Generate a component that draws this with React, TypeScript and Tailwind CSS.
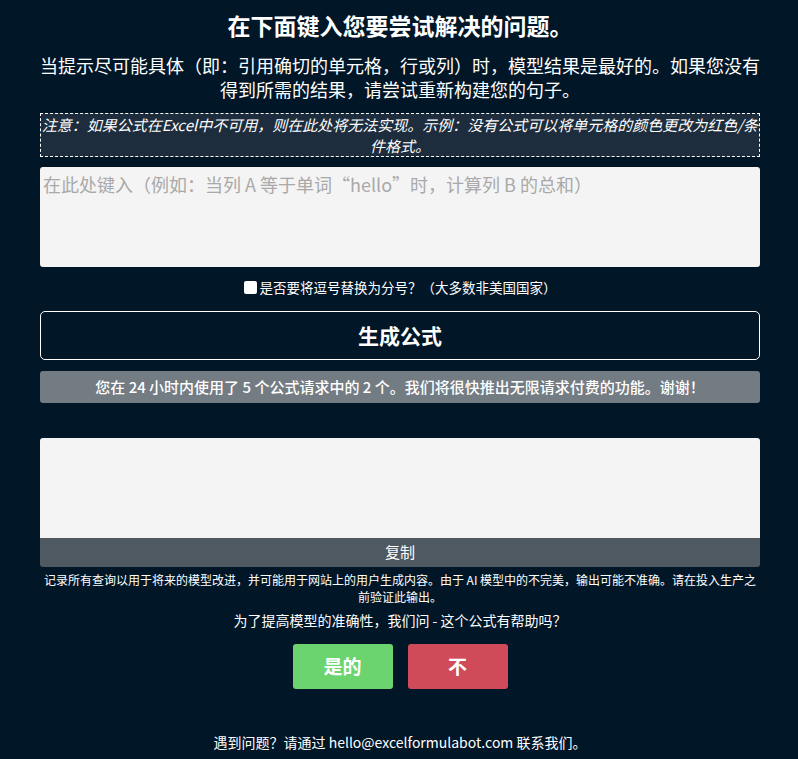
import React from "react";

export default function App() {
  const font = { fontFamily: '"Noto Sans CJK SC", "Noto Sans", sans-serif' };
  return (
    <div className="min-h-[759px] w-full bg-[#011627] text-white" style={font}>
      <div className="ml-[40px] flex w-[720px] flex-col items-stretch pt-[8px] pb-[6px]">
        <h1 className="text-center text-[23px] font-bold leading-[34px]">在下面键入您要尝试解决的问题。</h1>
        <p className="mt-[11px] text-center text-[18px] leading-[24px]">
          当提示尽可能具体（即：引用确切的单元格，行或列）时，模型结果是最好的。如果您没有得到所需的结果，请尝试重新构建您的句子。
        </p>
        <div className="mt-[12px] border border-dashed border-white bg-[#1d2d3d] py-[0px] text-center text-[15px] italic leading-[21px]">
          注意：如果公式在Excel中不可用，则在此处将无法实现。示例：没有公式可以将单元格的颜色更改为红色/条件格式。
        </div>
        <textarea
          className="mt-[10px] h-[100px] w-full resize-none rounded-[3px] bg-[#f4f4f4] px-[3px] py-[4px] text-[18px] leading-[26px] text-black outline-none placeholder:text-[#a9a9a9]"
          placeholder="在此处键入（例如：当列 A 等于单词“hello”时，计算列 B 的总和）"
          style={font}
        />
        <label className="mt-[11px] flex items-center justify-center gap-[3px] text-[13.5px] leading-[18px]">
          <input type="checkbox" className="h-[13px] w-[13px] appearance-none rounded-[2px] bg-white" />
          <span>是否要将逗号替换为分号？（大多数非美国国家）</span>
        </label>
        <button className="mt-[15px] h-[49px] w-full rounded-[5px] border border-white text-[21px] font-bold text-white">
          生成公式
        </button>
        <div className="mt-[11px] flex h-[32px] items-center justify-center rounded-[3px] bg-[#737b83] text-[15px] font-medium">
          您在 24 小时内使用了 5 个公式请求中的 2 个。我们将很快推出无限请求付费的功能。谢谢！
        </div>
        <div className="mt-[35px] h-[100px] rounded-t-[3px] bg-[#f4f4f4]" />
        <div className="flex h-[29px] items-center justify-center rounded-b-[3px] bg-[#4e5961] text-[15px]">复制</div>
        <p className="mt-[4px] text-center text-[12px] leading-[17px]">
          记录所有查询以用于将来的模型改进，并可能用于网站上的用户生成内容。由于 AI 模型中的不完美，输出可能不准确。请在投入生产之前验证此输出。
        </p>
        <p className="mt-[6px] text-center text-[14px] leading-[19px]">为了提高模型的准确性，我们问 - 这个公式有帮助吗？</p>
        <div className="mt-[14px] flex justify-center gap-[15px]">
          <button className="h-[45px] w-[100px] rounded-[3px] bg-[#6bd46f] text-[19px] font-bold text-white">是的</button>
          <button className="h-[45px] w-[100px] rounded-[3px] bg-[#d04b5a] text-[19px] font-bold text-white">不</button>
        </div>
        <p className="mt-[44px] text-center text-[14px] leading-[19px]">
          遇到问题？请通过 hello@excelformulabot.com 联系我们。
        </p>
      </div>
    </div>
  );
}
